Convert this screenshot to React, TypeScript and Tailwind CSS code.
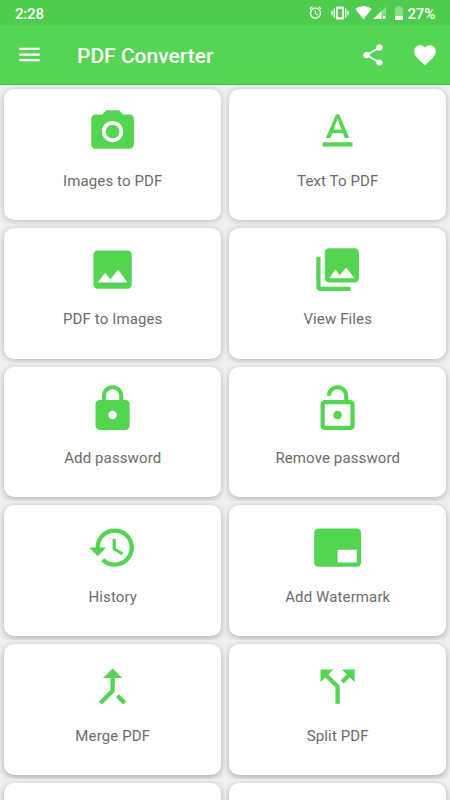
import React from 'react';
import {
    MdAlarm, MdBrandingWatermark, MdCallMerge, MdCallSplit, MdCollections, MdFavorite, MdHistory,
    MdImage, MdLock, MdLockOpen, MdMenu, MdPhotoCamera, MdShare, MdSignalWifi4Bar, MdTextFormat,
} from 'react-icons/md';

const rows = [
    {
        shadow: 'shadow-[0_1px_7px_rgba(0,0,0,0.24)]',
        tiles: [{ title: 'Images to PDF', icon: MdPhotoCamera }, { title: 'Text To PDF', icon: MdTextFormat }],
    },
    {
        shadow: 'shadow-[0_1px_7px_rgba(0,0,0,0.26)]',
        tiles: [{ title: 'PDF to Images', icon: MdImage }, { title: 'View Files', icon: MdCollections }],
    },
    {
        shadow: 'shadow-[0_2px_7px_rgba(0,0,0,0.26)]',
        tiles: [{ title: 'Add password', icon: MdLock }, { title: 'Remove password', icon: MdLockOpen }],
    },
    {
        shadow: 'shadow-[0_2px_7px_rgba(0,0,0,0.28)]',
        tiles: [{ title: 'History', icon: MdHistory }, { title: 'Add Watermark', icon: MdBrandingWatermark }],
    },
    {
        shadow: 'shadow-[0_2px_7px_rgba(0,0,0,0.30)]',
        tiles: [{ title: 'Merge PDF', icon: MdCallMerge }, { title: 'Split PDF', icon: MdCallSplit }],
    },
    {
        shadow: 'shadow-[0_2px_7px_rgba(0,0,0,0.30)]',
        tiles: [{ title: '', icon: null }, { title: '', icon: null }],
    },
];

const Tile = ({ title, icon: Icon, shadow }) => (
    <div className="h-[138.75px] p-1 overflow-hidden bg-[#f0f0f2]">
        <button className={`flex flex-col items-center w-full h-full rounded-[10px] bg-white pt-[16.5px] ${shadow}`}>
            {Icon && <Icon className="w-[51.2px] h-[51.2px] text-[#54d552]" />}
            <span className="mt-[14px] pl-[0.5px] text-[15px] leading-5 tracking-[0.12px] text-[#6c6c6c]">{title}</span>
        </button>
    </div>
);

const VibrateIcon = () => (
    <svg viewBox="0 0 18 14" className="w-[18px] h-[14px]" fill="white">
        <path fillRule="evenodd" d="M6 .5h6a1 1 0 0 1 1 1v11a1 1 0 0 1-1 1H6a1 1 0 0 1-1-1v-11a1 1 0 0 1 1-1zm.7 2.2v8.6h4.6V2.7z" />
        <path d="M2.6 2.6H4v8.8H2.6zM14 2.6h1.4v8.8H14zM.4 4.8h1.3v4.4H.4zM16.3 4.8h1.3v4.4h-1.3z" />
    </svg>
);

const SignalIcon = () => (
    <svg viewBox="0 0 14 14" className="w-[14px] h-[14px]">
        <path d="M13 .5v8H8.5V13H.5z" fill="white" fillOpacity=".35" />
        <path d="M8.5 5V13H.5z" fill="white" />
        <path d="M9.6 9.6l3.2 3.2M12.8 9.6l-3.2 3.2" stroke="white" strokeWidth="1.2" />
    </svg>
);

const BatteryIcon = () => (
    <svg viewBox="0 0 8 14" className="w-2 h-[14px]">
        <path d="M2.3 0h3.4v1.3H7c.6 0 1 .4 1 1V10H0V2.3c0-.6.4-1 1-1h1.3z" fill="white" fillOpacity=".35" />
        <path d="M0 10h8v3c0 .6-.4 1-1 1H1c-.6 0-1-.4-1-1z" fill="white" />
    </svg>
);

export default function App() {
    return (
        <div className="w-full h-[800px] overflow-hidden bg-[#f0f0f2] font-['Roboto',sans-serif]">
            <div className="flex items-center justify-between h-[25px] px-[15px] bg-[#4fcc4d] text-white text-[15px] font-medium">
                <span className="pt-[3px] tracking-[-0.2px]">2:28</span>
                <div className="flex items-center">
                    <MdAlarm className="w-[15px] h-[15px] mr-[8px]" />
                    <VibrateIcon />
                    <MdSignalWifi4Bar className="w-[17px] h-[17px] ml-[6px] mr-[1px]" />
                    <SignalIcon />
                    <span className="ml-[8px] mr-[5px]"><BatteryIcon /></span>
                    <span className="pt-[3px] tracking-[-0.2px]">27%</span>
                </div>
            </div>

            <header className="flex items-center h-[60px] pl-4 pr-3 bg-[#56d554] border-b border-[#2fc92d] text-white">
                <MdMenu className="w-[27px] h-[27px]" />
                <h1 className="ml-[34px] pt-[2px] flex-1 text-[21px] leading-6 font-medium">PDF Converter</h1>
                <MdShare className="w-[26px] h-[26px] mr-[26px]" />
                <MdFavorite className="w-[26px] h-[26px]" />
            </header>

            <main>
                {rows.map((row, i) => (
                    <div key={i} className="grid grid-cols-2">
                        {row.tiles.map((tile, j) => (
                            <Tile key={j} {...tile} shadow={row.shadow} />
                        ))}
                    </div>
                ))}
            </main>
        </div>
    );
}
